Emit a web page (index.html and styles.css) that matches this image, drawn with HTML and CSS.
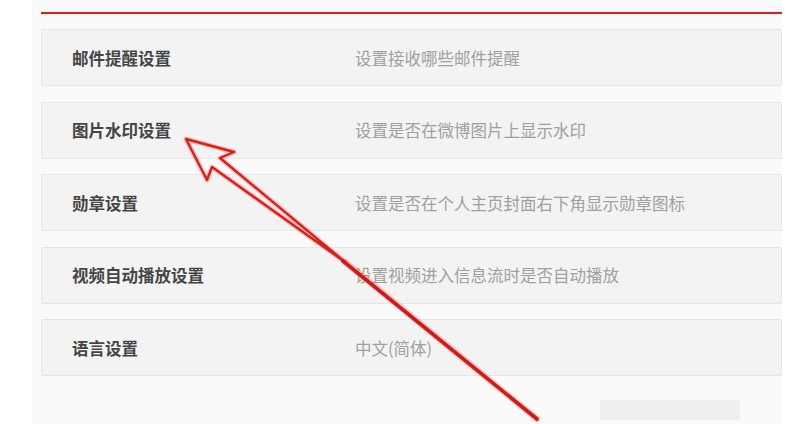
FILE: index.html
```
<!DOCTYPE html>
<html lang="zh-CN">
<head>
<meta charset="utf-8">
<title>设置</title>
<link rel="stylesheet" href="styles.css">
</head>
<body>
<div class="page">
  <div class="panel">
    <div class="rule"></div>
    <ul class="list">
      <li class="row"><span class="label">邮件提醒设置</span><span class="desc">设置接收哪些邮件提醒</span></li>
      <li class="row"><span class="label">图片水印设置</span><span class="desc">设置是否在微博图片上显示水印</span></li>
      <li class="row"><span class="label">勋章设置</span><span class="desc">设置是否在个人主页封面右下角显示勋章图标</span></li>
      <li class="row"><span class="label">视频自动播放设置</span><span class="desc">设置视频进入信息流时是否自动播放</span></li>
      <li class="row"><span class="label">语言设置</span><span class="desc">中文(简体)</span></li>
    </ul>
  </div>
  <div class="smudge"></div>
  <svg class="arrow" width="804" height="424" viewBox="0 0 804 424">
    <path class="glow" d="M345,262 L220,158 L234,152 L186,139 L207,180 L212,167 L345,262"/>
    <path class="glow tailglow" d="M345,262 L537,419"/>
    <path class="line" d="M345,262 L220,158 L234,152 L186,139 L207,180 L212,167 L345,262"/>
    <path class="line tail" d="M343,261 L537,419"/>
  </svg>
</div>
</body>
</html>
```
FILE: styles.css
```
html, body {
  margin: 0;
  padding: 0;
  background: #ffffff;
}
body {
  font-family: "Noto Sans CJK SC", "Liberation Sans", sans-serif;
  width: 804px;
  height: 424px;
  overflow: hidden;
}
.page {
  position: relative;
  width: 804px;
  height: 424px;
  padding-left: 32px;
  box-sizing: border-box;
}
.panel {
  width: 750px;
  height: 424px;
  background: #fafafa;
  padding: 12px 0 0 9px;
  box-sizing: border-box;
}
.rule {
  height: 2px;
  background: #a8332f;
  box-shadow: 0 0 2px rgba(220, 90, 90, 0.5);
}
.list {
  list-style: none;
  margin: 15px 0 0 0;
  padding: 0;
  display: flex;
  flex-direction: column;
  gap: 15.5px;
}
.row {
  height: 57px;
  box-sizing: border-box;
  background: #f3f3f3;
  border: 1px solid #e6e6e6;
  border-radius: 2px;
  display: flex;
  align-items: center;
  padding-left: 30px;
  font-size: 16.5px;
}
.label {
  width: 283px;
  flex: none;
  color: #454545;
  font-weight: 700;
}
.desc {
  color: #a0a0a0;
}
.smudge {
  position: absolute;
  left: 600px;
  top: 400px;
  width: 140px;
  height: 20px;
  background: #efefef;
}
.arrow {
  position: absolute;
  left: 0;
  top: 0;
  pointer-events: none;
}
.arrow path {
  fill: none;
  stroke-linejoin: round;
  stroke-linecap: round;
}
.arrow .glow {
  stroke: rgba(255, 90, 90, 0.35);
  stroke-width: 5;
}
.arrow .tailglow {
  stroke-width: 6.5;
}
.arrow .line {
  stroke: #d2221e;
  stroke-width: 2.4;
}
.arrow .tail {
  stroke: #c81d1a;
  stroke-width: 3.6;
}
```
